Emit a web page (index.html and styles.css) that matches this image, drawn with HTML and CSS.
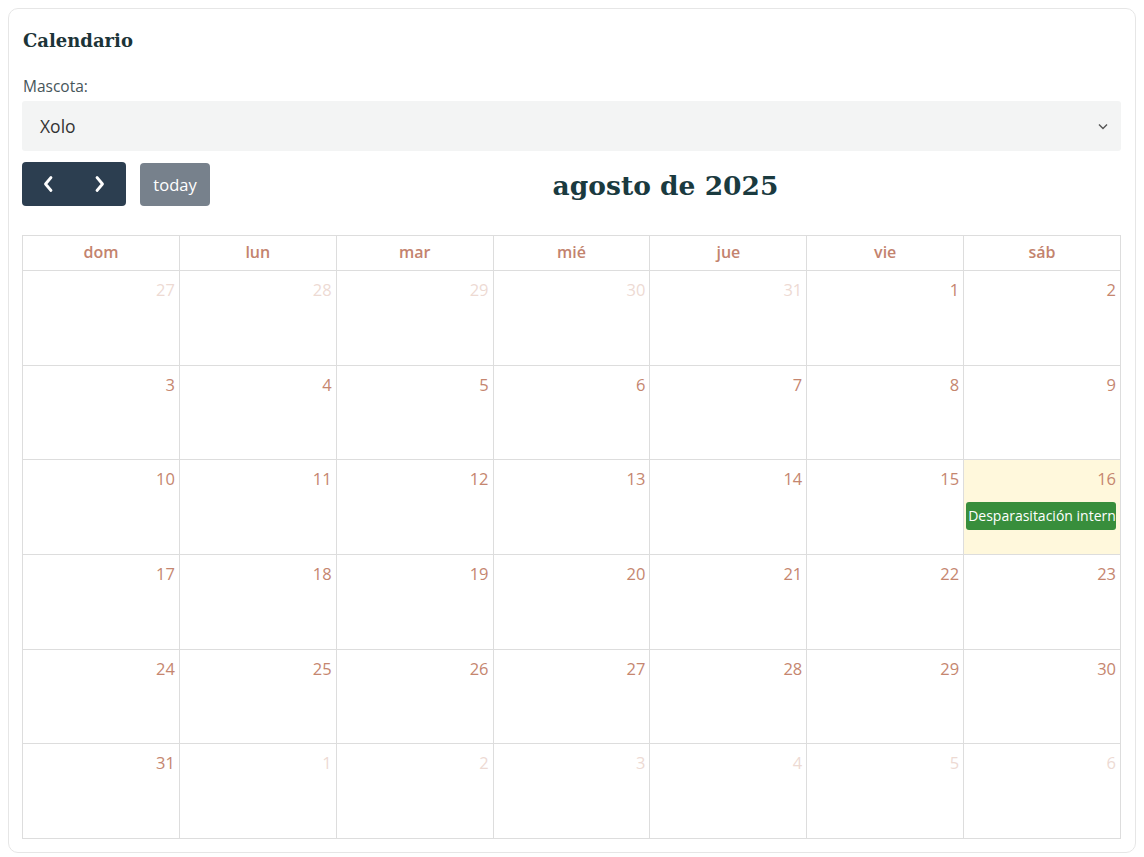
FILE: index.html
```html
<!DOCTYPE html>
<html lang="es">
<head>
<meta charset="utf-8">
<title>Calendario</title>
<link rel="stylesheet" href="styles.css">
</head>
<body>
<div class="card">
  <h2 class="card-title">Calendario</h2>
  <label class="field-label">Mascota:</label>
  <div class="select">
    <span>Xolo</span>
    <svg class="chev" width="10" height="7" viewBox="0 0 10 7"><path d="M1 1.5 L5 5.5 L9 1.5" fill="none" stroke="#555" stroke-width="1.4"/></svg>
  </div>
  <div class="toolbar">
    <div class="tb-left">
      <div class="btn-group">
        <button class="btn nav"><svg width="12" height="18" viewBox="0 0 12 18"><path d="M9 2.5 L3.5 9 L9 15.5" fill="none" stroke="#fff" stroke-width="2.8" stroke-linecap="round" stroke-linejoin="round"/></svg></button>
        <button class="btn nav"><svg width="12" height="18" viewBox="0 0 12 18"><path d="M3 2.5 L8.5 9 L3 15.5" fill="none" stroke="#fff" stroke-width="2.8" stroke-linecap="round" stroke-linejoin="round"/></svg></button>
      </div>
      <button class="btn today">today</button>
    </div>
    <h1 class="month-title">agosto de 2025</h1>
    <div class="tb-right"></div>
  </div>
  <div class="cal">
    <div class="hd">dom</div><div class="hd">lun</div><div class="hd">mar</div><div class="hd">mié</div><div class="hd">jue</div><div class="hd">vie</div><div class="hd">sáb</div>

    <div class="day other"><span class="num">27</span></div>
    <div class="day other"><span class="num">28</span></div>
    <div class="day other"><span class="num">29</span></div>
    <div class="day other"><span class="num">30</span></div>
    <div class="day other"><span class="num">31</span></div>
    <div class="day"><span class="num">1</span></div>
    <div class="day"><span class="num">2</span></div>

    <div class="day"><span class="num">3</span></div>
    <div class="day"><span class="num">4</span></div>
    <div class="day"><span class="num">5</span></div>
    <div class="day"><span class="num">6</span></div>
    <div class="day"><span class="num">7</span></div>
    <div class="day"><span class="num">8</span></div>
    <div class="day"><span class="num">9</span></div>

    <div class="day"><span class="num">10</span></div>
    <div class="day"><span class="num">11</span></div>
    <div class="day"><span class="num">12</span></div>
    <div class="day"><span class="num">13</span></div>
    <div class="day"><span class="num">14</span></div>
    <div class="day"><span class="num">15</span></div>
    <div class="day today-cell"><span class="num">16</span><div class="event">Desparasitación interna</div></div>

    <div class="day"><span class="num">17</span></div>
    <div class="day"><span class="num">18</span></div>
    <div class="day"><span class="num">19</span></div>
    <div class="day"><span class="num">20</span></div>
    <div class="day"><span class="num">21</span></div>
    <div class="day"><span class="num">22</span></div>
    <div class="day"><span class="num">23</span></div>

    <div class="day"><span class="num">24</span></div>
    <div class="day"><span class="num">25</span></div>
    <div class="day"><span class="num">26</span></div>
    <div class="day"><span class="num">27</span></div>
    <div class="day"><span class="num">28</span></div>
    <div class="day"><span class="num">29</span></div>
    <div class="day"><span class="num">30</span></div>

    <div class="day"><span class="num">31</span></div>
    <div class="day other"><span class="num">1</span></div>
    <div class="day other"><span class="num">2</span></div>
    <div class="day other"><span class="num">3</span></div>
    <div class="day other"><span class="num">4</span></div>
    <div class="day other"><span class="num">5</span></div>
    <div class="day other"><span class="num">6</span></div>
  </div>
</div>
</body>
</html>
```
FILE: styles.css
```css
* { box-sizing: border-box; }
body {
  margin: 8px;
  background: #fff;
  font-family: "Open Sans", "Noto Sans", sans-serif;
  color: #3d4b50;
}
.card {
  border: 1px solid #e6e6e6;
  border-radius: 10px;
  padding: 13px 14px 13px 13px;
  height: 845px;
  display: flex;
  flex-direction: column;
}
.card-title {
  font-family: "DejaVu Serif", "Liberation Serif", serif;
  font-weight: bold;
  font-size: 18px;
  color: #1c3438;
  margin: 7px 0 0 1px;
  line-height: 24px;
}
.field-label {
  display: block;
  margin-top: 22px;
  font-size: 15.5px;
  line-height: 22px;
  color: #46555a;
  padding-left: 1px;
}
.select {
  margin-top: 4px;
  height: 50px;
  background: #f3f4f4;
  border-radius: 3px;
  display: flex;
  align-items: center;
  justify-content: space-between;
  padding: 0 13px 0 18px;
  font-size: 17.5px;
  color: #333;
}
.toolbar {
  margin-top: 10px;
  display: flex;
  align-items: center;
  justify-content: space-between;
  height: 46px;
}
.tb-left { display: flex; align-items: center; gap: 14px; }
.tb-right { width: 0; }
.btn-group { display: flex; }
.btn {
  border: 0;
  font-family: inherit;
  color: #fff;
  background: #2c3e50;
  height: 44px;
  cursor: pointer;
}
.btn.nav {
  width: 52px;
  display: flex;
  align-items: center;
  justify-content: center;
  padding: 0;
}
.btn.nav:first-child { border-radius: 4px 0 0 4px; }
.btn.nav:last-child { border-radius: 0 4px 4px 0; }
.btn.today {
  background: #77818c;
  border-radius: 4px;
  width: 70px;
  height: 43px;
  font-size: 16.5px;
  padding: 0;
}
.month-title {
  margin: 0;
  font-family: "DejaVu Serif", "Liberation Serif", serif;
  font-weight: bold;
  font-size: 26.5px;
  color: #1a3a3f;
  padding-top: 2px;
}
.cal {
  margin-top: 28px;
  display: grid;
  grid-template-columns: repeat(7, 1fr);
  grid-template-rows: 35px repeat(6, 1fr);
  flex: 1;
  border-top: 1px solid #ddd;
  border-left: 1px solid #ddd;
}
.hd, .day {
  border-right: 1px solid #ddd;
  border-bottom: 1px solid #ddd;
}
.hd {
  text-align: center;
  font-weight: 600;
  font-size: 16px;
  line-height: 33px;
  color: #c3836e;
}
.day {
  display: flex;
  flex-direction: column;
  align-items: flex-end;
  padding: 8px 4px 0 2px;
  min-width: 0;
}
.num {
  font-size: 16.5px;
  line-height: 22px;
  color: #c5866f;
}
.day.other .num { opacity: 0.3; }
.today-cell { background: #fff8dc; }
.event {
  align-self: stretch;
  margin-top: 12px;
  background: #388e3c;
  border-radius: 3px;
  color: #fff;
  font-size: 14px;
  line-height: 28px;
  padding: 0 2px;
  white-space: nowrap;
  overflow: hidden;
}
```
